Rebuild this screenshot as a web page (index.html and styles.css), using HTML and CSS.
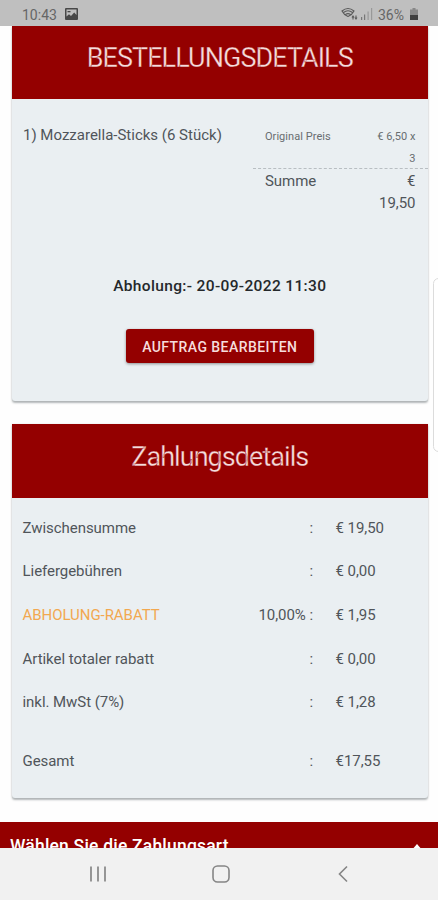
FILE: index.html
```html
<!DOCTYPE html>
<html lang="de">
<head>
<meta charset="utf-8">
<meta name="viewport" content="width=device-width">
<title>Bestellungsdetails</title>
<link rel="stylesheet" href="styles.css">
</head>
<body>
<header class="status">
  <span class="clock">10:43</span>
  <svg class="photo" width="13" height="12" viewBox="0 0 13 12"><path fill="#484848" fill-rule="evenodd" d="M1 0h11Q13 0 13 1v10Q13 12 12 12H1Q0 12 0 11V1Q0 0 1 0ZM1.500 1.500v7L4 6.200 6 8l3.200-3.500L11.500 7V1.500Z"/><path d="M2.500 3h3v1.300h-3z" fill="#484848"/></svg>
  <div class="status-right">
    <svg width="17" height="14" viewBox="0 0 17 14" fill="none" stroke="#5a5a5a" stroke-width="1.100"><path d="M1 4Q7 -1 13 4Q11 8 7 9.500Q3 8 1 4ZM2.500 5.500Q7 2 11.500 5.500M4.500 7.500Q7 5.800 9.500 7.500"/><path d="M12 12.500V9M11 10.500L12 9l1 1.500M15 8.500V12M14 10.500l1 1.500 1-1.500"/></svg>
    <svg width="13" height="12" viewBox="0 0 13 12"><path fill="#777" d="M1 9h1.200v3H1zM4 6.500h1.200V12H4z"/><path fill="#999" d="M7.500 3.500h1.200V12H7.500zM11 0h1.200v12H11z"/></svg>
    <span class="percent">36%</span>
    <svg class="battery" width="8" height="12" viewBox="0 0 8 12"><path fill="#888" d="M2.500 0h3v1.500H8V8H0V1.500h2.500z"/><path fill="#3f3f3f" d="M0 7h8v5H0z"/></svg>
  </div>
</header>
<main class="page">
  <section class="card order">
    <h1 class="card-title">BESTELLUNGSDETAILS</h1>
    <div class="item">
      <div class="item-name">1) Mozzarella-Sticks (6 Stück)</div>
      <div class="prices">
        <div class="price small"><span>Original Preis</span><span class="amount">€ 6,50 x<br>3</span></div>
        <div class="price sum"><span>Summe</span><span class="amount">€<br>19,50</span></div>
      </div>
    </div>
    <p class="pickup">Abholung:- 20-09-2022 11:30</p>
    <button class="edit" type="button">AUFTRAG BEARBEITEN</button>
  </section>
  <section class="card payment">
    <h2 class="card-title">Zahlungsdetails</h2>
    <div class="rows">
      <div class="row"><span>Zwischensumme</span><span class="mid">:</span><span class="value">€ 19,50</span></div>
      <div class="row"><span>Liefergebühren</span><span class="mid">:</span><span class="value">€ 0,00</span></div>
      <div class="row"><span class="discount">ABHOLUNG-RABATT</span><span class="mid">10,00% :</span><span class="value">€ 1,95</span></div>
      <div class="row"><span>Artikel totaler rabatt</span><span class="mid">:</span><span class="value">€ 0,00</span></div>
      <div class="row"><span>inkl. MwSt (7%)</span><span class="mid">:</span><span class="value">€ 1,28</span></div>
      <div class="row total"><span>Gesamt</span><span class="mid">:</span><span class="value">€17,55</span></div>
    </div>
  </section>
  <section class="accordion"><span>Wählen Sie die Zahlungsart</span><svg width="12" height="7" viewBox="0 0 12 7"><path d="M6 0l6 7H0z" fill="#fff"/></svg></section>
</main>
<div class="edge-panel"></div>
<nav class="nav">
  <svg width="18" height="18" viewBox="0 0 18 18" fill="none" stroke="#8c8c8c" stroke-width="1.800"><path d="M2 1.500v15M9 1.500v15M16 1.500v15"/></svg>
  <svg width="18" height="18" viewBox="0 0 18 18" fill="none" stroke="#858585" stroke-width="1.600"><rect x="1" y="1" width="16" height="16" rx="4.500"/></svg>
  <svg width="18" height="18" viewBox="0 0 18 18" fill="none" stroke="#858585" stroke-width="1.600"><path d="M13 1.500L5.500 9l7.500 7.500"/></svg>
</nav>
</body>
</html>
```
FILE: styles.css
```css
* { box-sizing: border-box; }
body {
  margin: 0;
  height: 900px;
  overflow: hidden;
  display: flex;
  flex-direction: column;
  background: #fefefe;
  color: #50555a;
  font-family: Roboto, sans-serif;
  font-size: 15px;
  letter-spacing: -.05px;
}
svg { display: block; flex: none; }
.status {
  height: 26px;
  flex: none;
  display: flex;
  align-items: center;
  padding: 3px 20px 0 22px;
  background: #bfbfbf;
  color: #666;
  font-size: 14px;
  letter-spacing: 0;
}
.clock { width: 43px; }
.photo { margin-top: -2px; }
.status-right { margin-left: auto; display: flex; align-items: center; }
.status-right svg { margin-top: -2px; }
.status-right svg:first-child { margin-right: 2px; }
.percent { margin-left: 5px; width: 32px; white-space: nowrap; }
.page { height: 822px; flex: none; overflow: hidden; }
.card {
  margin: 0 10.500px 0 12px;
  background: #eaeff2;
  border-radius: 0 0 3px 3px;
  box-shadow: 0 2px 2px rgba(70, 80, 85, .4), 0 0 2px rgba(0, 0, 0, .12);
}
.order { height: 375px; }
.payment { height: 374px; margin-top: 23px; }
.card-title {
  margin: 0;
  height: 73px;
  padding-top: 16px;
  background: #940000;
  color: #f5dcdc;
  font-size: 27px;
  line-height: 32px;
  font-weight: 400;
  letter-spacing: -.95px;
  text-align: center;
  white-space: nowrap;
  -webkit-text-stroke: .3px #940000;
}
.payment .card-title { height: 74px; padding-top: 17px; }
.item { height: 162px; padding-top: 24px; display: flex; }
.item-name { width: 241px; padding-left: 11px; line-height: 24px; letter-spacing: 0; white-space: nowrap; }
.prices { flex: 1; }
.price {
  display: flex;
  justify-content: space-between;
  padding: 0 12px;
  line-height: 22px;
}
.amount { text-align: right; }
.small {
  height: 46px;
  padding-top: 3px;
  border-bottom: 1px dashed #b8bec2;
  color: #686d70;
  font-size: 11px;
  letter-spacing: .05px;
}
.sum { padding-top: 1px; }
.pickup {
  margin: 0;
  padding-top: 13px;
  line-height: 24px;
  text-align: center;
  color: #24282b;
  font-size: 15.500px;
  font-weight: 500;
  letter-spacing: .35px;
}
.edit {
  display: block;
  margin: 31px auto 0;
  width: 188px;
  height: 34px;
  padding: 1px 0 0;
  border: 0;
  border-radius: 3px;
  background: #940000;
  color: #f6dddd;
  font: 500 14px Roboto, sans-serif;
  letter-spacing: .43px;
  box-shadow: 0 1px 3px rgba(0, 0, 0, .4);
  white-space: nowrap;
}
.rows { padding-top: 8px; }
.row {
  height: 43.600px;
  display: grid;
  grid-template-columns: 180px 110.500px 1fr;
  align-items: center;
  padding-left: 10.500px;
  white-space: nowrap;
}
.mid { text-align: right; }
.value { padding-left: 22.500px; }
.discount { color: #f2a850; }
.total { margin-top: 15px; }
.accordion {
  height: 50px;
  margin-top: 24px;
  padding: 14px 15px 0 10px;
  display: flex;
  justify-content: space-between;
  background: #940000;
  color: #fff;
  font-size: 17.500px;
  line-height: 20px;
  font-weight: 500;
  letter-spacing: .2px;
}
.accordion svg { margin-top: 8px; }
.edge-panel {
  position: absolute;
  right: -6px;
  top: 278px;
  width: 11px;
  height: 174px;
  border: 1px solid #dcdcdc;
  border-radius: 6px;
  background: #fff;
}
.nav {
  height: 52px;
  flex: none;
  display: flex;
  align-items: center;
  justify-content: space-between;
  padding: 0 86px 0 89px;
  background: #f1f1f1;
}
```
